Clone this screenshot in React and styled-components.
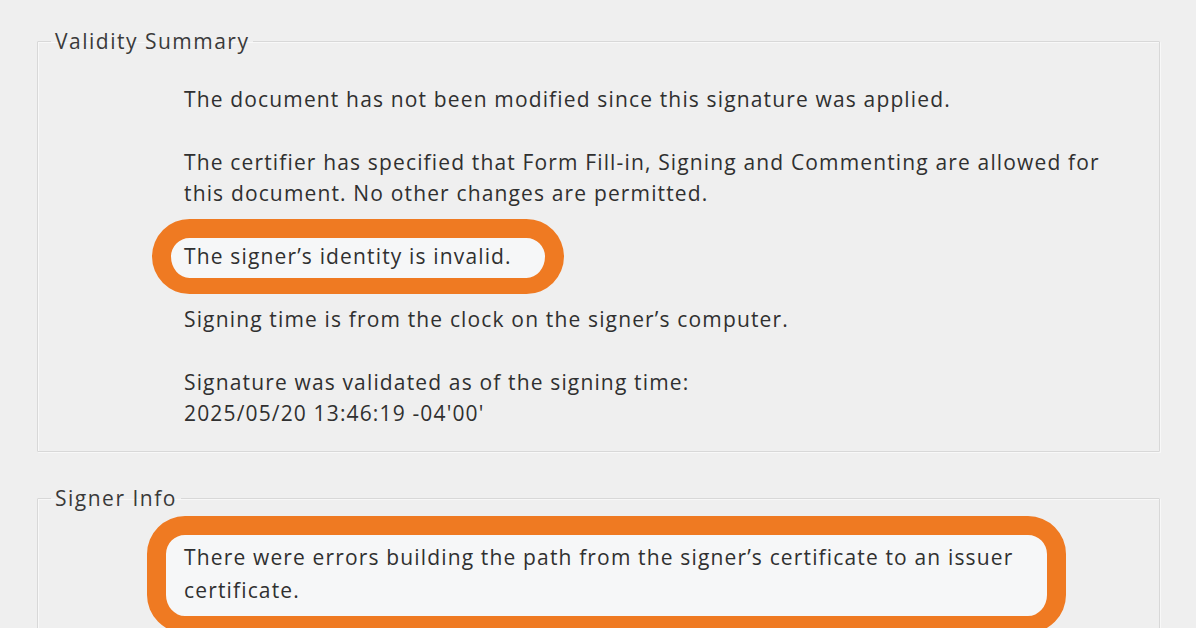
import React from "react";
import styled, { createGlobalStyle } from "styled-components";

const Global = createGlobalStyle`
  html, body {
    margin: 0;
    padding: 0;
    background: #efefef;
  }
  body {
    font-family: "Open Sans", "Noto Sans", Arial, sans-serif;
    color: #303030;
    -webkit-font-smoothing: antialiased;
  }
`;

const Page = styled.div`
  width: 1196px;
  height: 628px;
  overflow: hidden;
  box-sizing: border-box;
  padding: 29px 36px 0 37px;
  display: flex;
  flex-direction: column;
`;

const Group = styled.fieldset`
  margin: ${(p) => (p.$first ? "0" : "34px")} 0 0 0;
  padding: 0 40px ${(p) => p.$pb || "22px"} 13px;
  border: 1px solid #d8d8d8;
  border-radius: 1px;
  box-shadow: inset 1px 1px 0 #f8f8f8, 1px 1px 0 #f8f8f8;
  min-width: 0;
  flex-shrink: 0;
`;

const Legend = styled.legend`
  padding: 0 4px;
  font-size: 21px;
  letter-spacing: 1.5px;
  line-height: 24px;
  color: #3a3a3a;
`;

const Body = styled.div`
  margin-left: 133px;
  padding-top: ${(p) => p.$pt || "31px"};
  display: flex;
  flex-direction: column;
  align-items: flex-start;
  gap: 32px;
`;

const Para = styled.div`
  font-size: 21px;
  letter-spacing: 1.15px;
  line-height: 31px;
  white-space: nowrap;
`;

const Ring = styled.div`
  position: relative;
  isolation: isolate;
  display: inline-block;
  font-size: 21px;
  letter-spacing: 1.15px;
  line-height: ${(p) => p.$lh || "31px"};
  white-space: nowrap;

  &::before {
    content: "";
    position: absolute;
    z-index: -1;
    top: ${(p) => p.$t};
    right: ${(p) => p.$r};
    bottom: ${(p) => p.$b};
    left: ${(p) => p.$l};
    border: 19px solid #ef7a22;
    border-bottom-width: ${(p) => p.$bw || "17px"};
    border-radius: 38px;
    background: #f6f7f8;
  }
`;

export default function App() {
  return (
    <>
      <Global />
      <Page>
        <Group $first>
          <Legend>Validity Summary</Legend>
          <Body>
            <Para>The document has not been modified since this signature was applied.</Para>
            <Para>
              The certifier has specified that Form Fill-in, Signing and Commenting are allowed for
              <br />
              this document. No other changes are permitted.
            </Para>
            <Ring $t="-22px" $r="-52px" $b="-22px" $l="-32px" $bw="16px">
              The signer’s identity is invalid.
            </Ring>
            <Para>Signing time is from the clock on the signer’s computer.</Para>
            <Para>
              Signature was validated as of the signing time:
              <br />
              2025/05/20 13:46:19 -04'00'
            </Para>
          </Body>
        </Group>
        <Group $pb="60px">
          <Legend>Signer Info</Legend>
          <Body $pt="31px">
            <Ring $t="-25px" $r="-53px" $b="-26px" $l="-37px" $lh="33px">
              There were errors building the path from the signer’s certificate to an issuer
              <br />
              certificate.
            </Ring>
          </Body>
        </Group>
      </Page>
    </>
  );
}
